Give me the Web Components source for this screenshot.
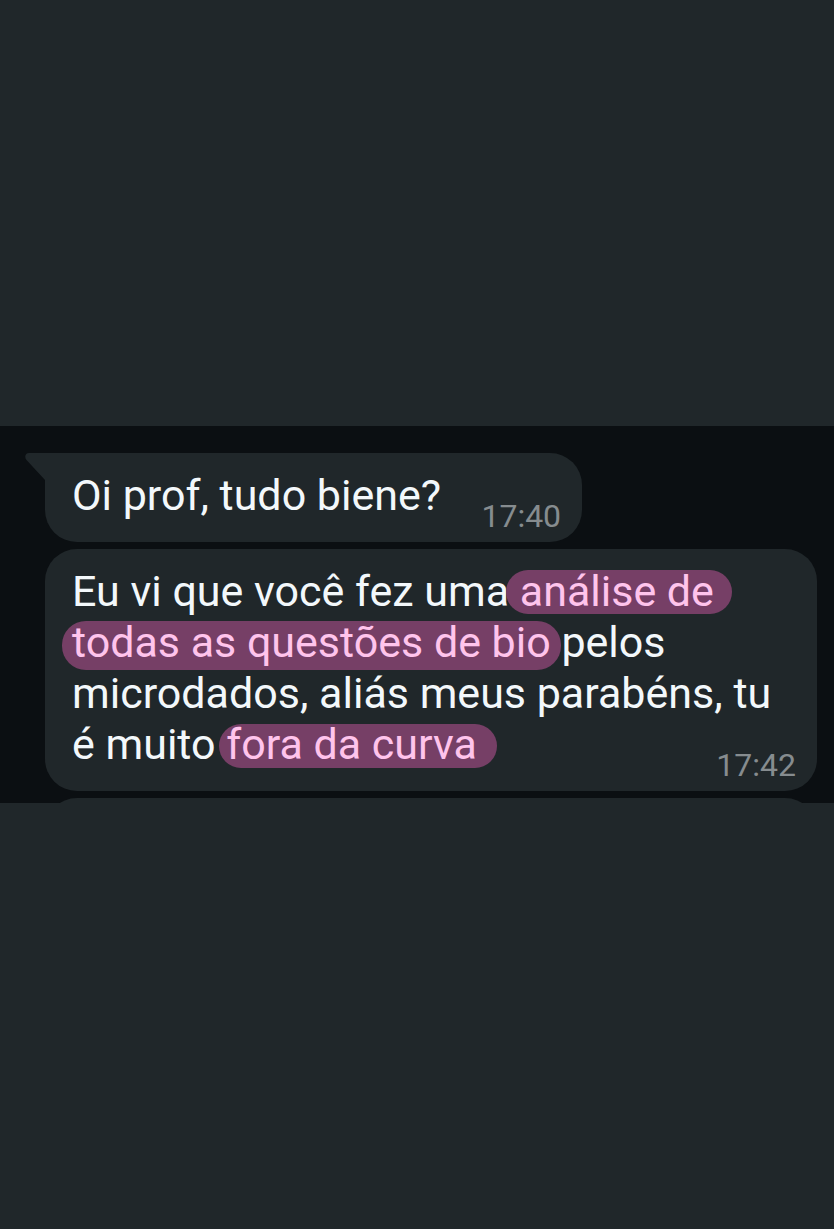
<!DOCTYPE html>
<html lang="pt-BR">
<head>
<meta charset="utf-8">
<meta name="viewport" content="width=device-width, initial-scale=1">
<title>Conversa</title>
<style>
  body {
    margin: 0;
    background: #20272a;
    font-family: Roboto, "Liberation Sans", sans-serif;
  }
</style>
</head>
<body>
<chat-story>
  <chat-bubble time="17:40" tail>Oi prof, tudo biene?</chat-bubble>
  <chat-bubble time="17:42" wide>Eu vi que você fez uma <text-mark class="lead">análise de</text-mark> <text-mark class="middle">todas as questões de bio</text-mark> pelos microdados, aliás meus parabéns, tu é muito <text-mark class="end">fora da curva</text-mark></chat-bubble>
  <chat-bubble wide cut></chat-bubble>
</chat-story>

<script>
class ChatStory extends HTMLElement {
  constructor() {
    super();
    this.attachShadow({ mode: 'open' });
  }

  connectedCallback() {
    this.shadowRoot.innerHTML = `
      <style>
        :host {
          display: flex;
          flex-direction: column;
          justify-content: center;
          min-height: 100vh;
        }

        .strip {
          display: flex;
          flex-direction: column;
          align-items: flex-start;
          gap: 7px;
          padding: 27px 17px 0 45px;
          background: #0b0f12;
          overflow: hidden;
        }
      </style>
      <main class="strip"><slot></slot></main>
    `;
  }
}

class ChatBubble extends HTMLElement {
  constructor() {
    super();
    this.attachShadow({ mode: 'open' });
  }

  connectedCallback() {
    const time = this.getAttribute('time');

    this.shadowRoot.innerHTML = `
      <style>
        :host {
          display: grid;
          position: relative;
          border-radius: 32px;
          background: #20272a;
          color: #f3f8fb;
        }

        :host([wide]) {
          align-self: stretch;
        }

        :host([tail]) {
          border-top-left-radius: 0;
        }

        /* next message, the strip cuts it off below its top edge */
        :host([cut]) {
          height: 65px;
          margin-bottom: -60px;
        }

        .text,
        time {
          grid-area: 1 / 1;
        }

        .text {
          margin: 0;
          padding: 17px 21px 21px 27px;
          font-size: 43px;
          line-height: 51px;
        }

        /* keeps the last line clear of the time */
        .text::after {
          content: "";
          display: inline-block;
          width: 120px;
        }

        time {
          place-self: end;
          margin: 0 21px 7px;
          font-size: 32px;
          line-height: 38px;
          color: #868c8f;
        }

        .tail {
          position: absolute;
          top: 0;
          left: -20px;
          fill: #20272a;
        }
      </style>
      ${this.hasAttribute('tail') ? `
        <svg class="tail" width="21" height="29" viewBox="0 0 21 29" aria-hidden="true">
          <path d="M21 0H4C0.5 0-1 4 1.500 7L20 27V29H21Z"/>
        </svg>` : ''}
      ${time ? `<p class="text"><slot></slot></p><time>${time}</time>` : ''}
    `;
  }
}

class TextMark extends HTMLElement {
  constructor() {
    super();
    this.attachShadow({ mode: 'open' });
  }

  connectedCallback() {
    this.shadowRoot.innerHTML = `
      <style>
        :host {
          display: inline-block;
          border-radius: 24px;
          background: #763f66;
          color: #ffc4ec;
          line-height: 42px;
        }

        :host(.lead) {
          padding: 0 18px 2px 14px;
          margin: 0 -18px -2px -14px;
        }

        :host(.middle) {
          padding: 0 10px 7px;
          margin: 0 -10px -7px;
        }

        :host(.end) {
          padding: 0 20px 4px 7px;
          margin: 0 -20px -4px -7px;
          line-height: 40px;
        }
      </style>
      <slot></slot>
    `;
  }
}

customElements.define('chat-story', ChatStory);
customElements.define('chat-bubble', ChatBubble);
customElements.define('text-mark', TextMark);
</script>
</body>
</html>
